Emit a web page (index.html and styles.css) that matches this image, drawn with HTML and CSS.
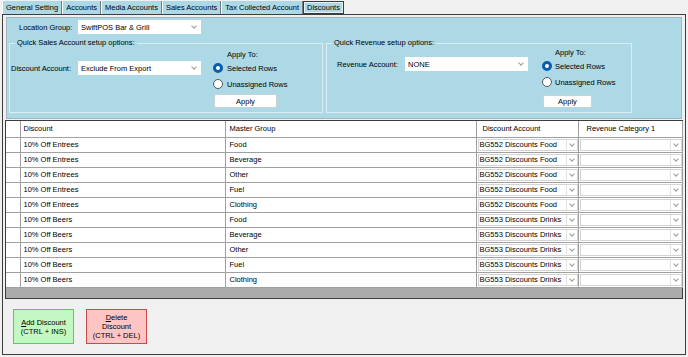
FILE: index.html
```html
<!DOCTYPE html>
<html lang="en">
<head>
    <meta charset="UTF-8">
    <meta name="viewport" content="width=device-width, initial-scale=1.0">
    <title>Discounts</title>
    <link rel="stylesheet" href="styles.css">
</head>
<body>
    <ul class="tabs">
        <li>General Setting</li>
        <li>Accounts</li>
        <li>Media Accounts</li>
        <li>Sales Accounts</li>
        <li>Tax Collected Account</li>
        <li class="active">Discounts</li>
    </ul>
    <div class="page">
        <div class="panel">
            <div class="location">
                <label>Location Group:</label>
                <div class="select"><span>SwiftPOS Bar &amp; Grill</span><i class="chev"></i></div>
            </div>
            <div class="groups">
                <fieldset class="group sales">
                    <legend>Quick Sales Account setup options:</legend>
                    <div class="field">
                        <label>Discount Account:</label>
                        <div class="select"><span>Exclude From Export</span><i class="chev"></i></div>
                    </div>
                    <div class="apply">
                        <div class="apply-title">Apply To:</div>
                        <div class="radio checked"><i></i>Selected Rows</div>
                        <div class="radio"><i></i>Unassigned Rows</div>
                        <button>Apply</button>
                    </div>
                </fieldset>
                <fieldset class="group revenue">
                    <legend>Quick Revenue setup options:</legend>
                    <div class="field">
                        <label>Revenue Account:</label>
                        <div class="select"><span>NONE</span><i class="chev"></i></div>
                    </div>
                    <div class="apply">
                        <div class="apply-title">Apply To:</div>
                        <div class="radio checked"><i></i>Selected Rows</div>
                        <div class="radio"><i></i>Unassigned Rows</div>
                        <button>Apply</button>
                    </div>
                </fieldset>
            </div>
        </div>

        <div class="grid">
            <table>
                <colgroup>
                    <col class="c-head">
                    <col class="c-disc">
                    <col class="c-group">
                    <col class="c-acct">
                    <col class="c-rev">
                </colgroup>
                <thead>
                    <tr>
                        <th></th>
                        <th>Discount</th>
                        <th>Master Group</th>
                        <th class="th-combo">Discount Account</th>
                        <th class="th-rev">Revenue Category 1</th>
                    </tr>
                </thead>
                <tbody>
                    <tr><td></td><td>10% Off Entrees</td><td>Food</td><td class="cell"><div class="combo"><span>BG552 Discounts Food</span><b><i class="chev"></i></b></div></td><td class="cell"><div class="combo"><span></span><b><i class="chev"></i></b></div></td></tr>
                    <tr><td></td><td>10% Off Entrees</td><td>Beverage</td><td class="cell"><div class="combo"><span>BG552 Discounts Food</span><b><i class="chev"></i></b></div></td><td class="cell"><div class="combo"><span></span><b><i class="chev"></i></b></div></td></tr>
                    <tr><td></td><td>10% Off Entrees</td><td>Other</td><td class="cell"><div class="combo"><span>BG552 Discounts Food</span><b><i class="chev"></i></b></div></td><td class="cell"><div class="combo"><span></span><b><i class="chev"></i></b></div></td></tr>
                    <tr><td></td><td>10% Off Entrees</td><td>Fuel</td><td class="cell"><div class="combo"><span>BG552 Discounts Food</span><b><i class="chev"></i></b></div></td><td class="cell"><div class="combo"><span></span><b><i class="chev"></i></b></div></td></tr>
                    <tr><td></td><td>10% Off Entrees</td><td>Clothing</td><td class="cell"><div class="combo"><span>BG552 Discounts Food</span><b><i class="chev"></i></b></div></td><td class="cell"><div class="combo"><span></span><b><i class="chev"></i></b></div></td></tr>
                    <tr><td></td><td>10% Off Beers</td><td>Food</td><td class="cell"><div class="combo"><span>BG553 Discounts Drinks</span><b><i class="chev"></i></b></div></td><td class="cell"><div class="combo"><span></span><b><i class="chev"></i></b></div></td></tr>
                    <tr><td></td><td>10% Off Beers</td><td>Beverage</td><td class="cell"><div class="combo"><span>BG553 Discounts Drinks</span><b><i class="chev"></i></b></div></td><td class="cell"><div class="combo"><span></span><b><i class="chev"></i></b></div></td></tr>
                    <tr><td></td><td>10% Off Beers</td><td>Other</td><td class="cell"><div class="combo"><span>BG553 Discounts Drinks</span><b><i class="chev"></i></b></div></td><td class="cell"><div class="combo"><span></span><b><i class="chev"></i></b></div></td></tr>
                    <tr><td></td><td>10% Off Beers</td><td>Fuel</td><td class="cell"><div class="combo"><span>BG553 Discounts Drinks</span><b><i class="chev"></i></b></div></td><td class="cell"><div class="combo"><span></span><b><i class="chev"></i></b></div></td></tr>
                    <tr><td></td><td>10% Off Beers</td><td>Clothing</td><td class="cell"><div class="combo"><span>BG553 Discounts Drinks</span><b><i class="chev"></i></b></div></td><td class="cell"><div class="combo"><span></span><b><i class="chev"></i></b></div></td></tr>
                </tbody>
            </table>
        </div>

        <div class="actions">
            <button class="btn-add"><u>A</u>dd Discount<br>(CTRL + INS)</button>
            <button class="btn-delete"><u>D</u>elete<br>Discount<br>(CTRL + DEL)</button>
        </div>
    </div>
</body>
</html>
```

FILE: styles.css
```css
* {
    box-sizing: border-box;
    margin: 0;
    padding: 0;
}
body {
    width: 688px;
    height: 357px;
    overflow: hidden;
    background-color: #f0f0f0;
    font: 7.5px "Liberation Sans", Arial, sans-serif;
    color: #000;
}
button {
    font: inherit;
    color: #000;
}

/* tab strip */
.tabs {
    display: flex;
    height: 14px;
    margin-left: 2px;
    padding-top: 1px;
    list-style: none;
}
.tabs li {
    height: 13px;
    padding: 0 3px;
    line-height: 13px;
    background-color: #add8e6;
    border-left: 1px solid #fff;
    border-right: 1px solid #7a7a7a;
    white-space: nowrap;
}
.tabs li.active {
    border: 1px solid #3c3c3c;
    line-height: 11px;
    box-shadow: inset 0 0 0 1px #e4f2f6;
}

/* tab page */
.page {
    height: 341px;
    margin: 0 2px;
    padding: 2px 2px 0;
    border: 1px solid #3c3c3c;
}

/* blue options panel */
.panel {
    height: 102px;
    margin: 0 1px;
    padding-top: 2px;
    background-color: #add8e6;
    border: 1px solid #9fb6be;
}
.location {
    display: flex;
    align-items: center;
    height: 14px;
    padding-left: 12px;
}
.location label {
    width: 59px;
}
.select {
    display: flex;
    align-items: center;
    justify-content: space-between;
    width: 123px;
    height: 14px;
    padding: 0 5px 0 3px;
    background-color: #fff;
}
.chev {
    display: block;
    width: 4px;
    height: 4px;
    margin-top: -2px;
    border-right: 1px solid #9a9a9a;
    border-bottom: 1px solid #9a9a9a;
    transform: rotate(45deg);
}

.groups {
    display: flex;
    gap: 3px;
    margin-top: 4px;
    padding-left: 2px;
}
.group {
    display: flex;
    align-items: flex-start;
    height: 75px;
    min-width: 0;
    border: 1px solid #d9edf3;
}
.group legend {
    margin-left: 5px;
    padding: 0 2px;
    line-height: 10px;
}
.sales {
    width: 314px;
}
.revenue {
    width: 306px;
}
.field {
    display: flex;
    align-items: center;
}
.sales .field {
    margin: 13px 0 0 1px;
}
.sales .field label {
    width: 67px;
}
.revenue .field {
    margin: 9px 0 0 10px;
}
.revenue .field label {
    width: 68px;
}

.apply-title {
    line-height: 10px;
}
.radio {
    display: flex;
    align-items: center;
    gap: 4px;
    height: 10px;
    margin-top: 3px;
}
.radio + .radio {
    margin-top: 6px;
}
.radio i {
    width: 10px;
    height: 10px;
    border-radius: 50%;
    border: 1px solid #555;
    background-color: #fff;
}
.radio.checked i {
    border: 3px solid #0a5cad;
}
.apply button {
    display: block;
    height: 14px;
    margin-left: 1px;
    background-color: #fff;
    border: 1px solid #c9d3d6;
    border-radius: 2px;
}
.sales .apply {
    margin: 2px 0 0 12px;
}
.sales .apply-title {
    padding-left: 14px;
}
.sales .apply button {
    width: 63px;
    margin-top: 5px;
}
.revenue .apply {
    margin-left: 14px;
}
.revenue .apply-title {
    padding-left: 13px;
}
.revenue .radio {
    gap: 3px;
}
.revenue .apply button {
    width: 49px;
    height: 13px;
    margin-top: 8px;
}

/* data grid */
.grid {
    height: 179px;
    margin-top: 1px;
    background-color: #ababab;
    border: 1px solid #3c3c3c;
}
.grid table {
    width: 676px;
    table-layout: fixed;
    border-collapse: collapse;
    background-color: #fff;
}
.c-head { width: 14px; }
.c-disc { width: 205px; }
.c-group { width: 251px; }
.c-acct { width: 102px; }
.c-rev { width: 104px; }
.grid th,
.grid td {
    padding: 0 0 0 3px;
    border-right: 1px solid #a0a0a0;
    border-bottom: 1px solid #a0a0a0;
    font-weight: normal;
    text-align: left;
    white-space: nowrap;
    overflow: hidden;
    line-height: 12px;
}
.grid th:nth-child(3),
.grid td:nth-child(3) {
    padding-left: 4px;
}
.grid thead tr {
    height: 16px;
}
.grid tbody tr {
    height: 15px;
}
.grid th.th-combo {
    padding-left: 6px;
}
.grid th.th-rev {
    padding-left: 8px;
}
.grid td.cell {
    padding: 1px 0 0 1px;
}
.combo {
    display: flex;
    height: 12px;
    border: 1px solid #d4d4d4;
}
.combo span {
    flex: 1;
    padding-left: 1px;
    line-height: 10px;
}
.combo b {
    display: flex;
    align-items: center;
    justify-content: center;
    width: 11px;
    border-left: 1px solid #e2e2e2;
}

/* bottom buttons */
.actions {
    display: flex;
    gap: 12px;
    padding: 10px 0 0 8px;
}
.actions button {
    width: 61px;
    height: 35px;
    line-height: 9px;
    text-align: center;
}
.btn-add {
    background-color: #c2f8c2;
    border: 1px solid #5fc75f;
}
.btn-delete {
    background-color: #ffc4c4;
    border: 1px solid #c84a4a;
}
```
